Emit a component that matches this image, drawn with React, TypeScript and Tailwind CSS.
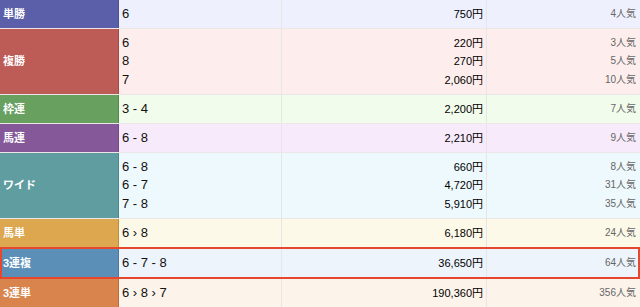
import React from 'react';

interface Payout {
  combo: string;
  amount: string;
  rank: string;
}

interface BetRow {
  label: string;
  labelBg: string;
  rowBg: string;
  items: Payout[];
  highlight?: boolean;
  noBorder?: boolean;
}

const rows: BetRow[] = [
  {
    label: '単勝',
    labelBg: 'bg-[#5b5ea9]',
    rowBg: 'bg-[#eef1fd]',
    items: [{ combo: '6', amount: '750円', rank: '4人気' }]
  },
  {
    label: '複勝',
    labelBg: 'bg-[#bd5b56]',
    rowBg: 'bg-[#fdeeed]',
    items: [
      { combo: '6', amount: '220円', rank: '3人気' },
      { combo: '8', amount: '270円', rank: '5人気' },
      { combo: '7', amount: '2,060円', rank: '10人気' }
    ]
  },
  {
    label: '枠連',
    labelBg: 'bg-[#67a05f]',
    rowBg: 'bg-[#f2fcec]',
    items: [{ combo: '3 - 4', amount: '2,200円', rank: '7人気' }]
  },
  {
    label: '馬連',
    labelBg: 'bg-[#845899]',
    rowBg: 'bg-[#f7eafb]',
    items: [{ combo: '6 - 8', amount: '2,210円', rank: '9人気' }]
  },
  {
    label: 'ワイド',
    labelBg: 'bg-[#609da1]',
    rowBg: 'bg-[#eef9fd]',
    items: [
      { combo: '6 - 8', amount: '660円', rank: '8人気' },
      { combo: '6 - 7', amount: '4,720円', rank: '31人気' },
      { combo: '7 - 8', amount: '5,910円', rank: '35人気' }
    ]
  },
  {
    label: '馬単',
    labelBg: 'bg-[#dca74f]',
    rowBg: 'bg-[#fdf9e8]',
    items: [{ combo: '6 › 8', amount: '6,180円', rank: '24人気' }],
    noBorder: true
  },
  {
    label: '3連複',
    labelBg: 'bg-[#5b8fb8]',
    rowBg: 'bg-[#edf4fb]',
    items: [{ combo: '6 - 7 - 8', amount: '36,650円', rank: '64人気' }],
    highlight: true
  },
  {
    label: '3連単',
    labelBg: 'bg-[#d9844c]',
    rowBg: 'bg-[#fcf3ea]',
    items: [{ combo: '6 › 8 › 7', amount: '190,360円', rank: '356人気' }]
  }
];

const App = () => {
  return (
    <div className="w-[640px] h-[307px] overflow-hidden bg-white font-['Liberation_Sans','Noto_Sans_CJK_JP',sans-serif]">
      {rows.map(row => (
        <div
          key={row.label}
          className={`flex ${row.rowBg} ${
            row.highlight
              ? 'py-[2px] outline-2 -outline-offset-2 outline-[#e8472f]'
              : row.noBorder
                ? ''
                : 'border-b border-[#ebe7e7]'
          }`}
        >
          <div
            className={`w-[119px] shrink-0 flex items-center pl-[3px] border-r border-black/15 text-white text-[11px] font-bold ${row.labelBg}`}
          >
            {row.label}
          </div>
          <div className="w-[163px] shrink-0 pl-[3px] py-[4.75px] border-r border-[#e6e6e6] text-[13px] text-[#111]">
            {row.items.map((item, i) => (
              <div key={i} className="leading-[18.5px]">{item.combo}</div>
            ))}
          </div>
          <div className="w-[205px] shrink-0 pr-[3px] py-[4.75px] border-r border-[#e6e6e6] text-right text-[11px] text-black">
            {row.items.map((item, i) => (
              <div key={i} className="leading-[18.5px]">{item.amount}</div>
            ))}
          </div>
          <div className="flex-1 pr-[4px] py-[4.75px] text-right text-[10px] text-[#666]">
            {row.items.map((item, i) => (
              <div key={i} className="leading-[18.5px]">{item.rank}</div>
            ))}
          </div>
        </div>
      ))}
    </div>
  );
};

export default App;
